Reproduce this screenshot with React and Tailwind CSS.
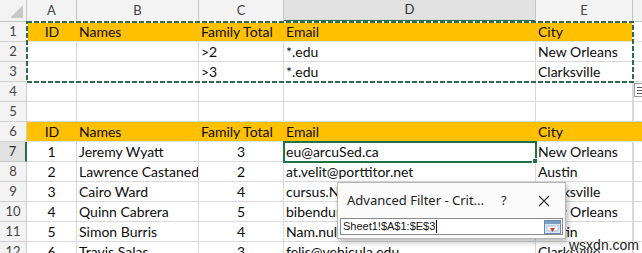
import React from 'react';

const COLS = [
  { letter: 'A', w: 'w-[50px]' },
  { letter: 'B', w: 'w-[122px]' },
  { letter: 'C', w: 'w-[85px]' },
  { letter: 'D', w: 'w-[252px]' },
  { letter: 'E', w: 'w-[97px]' },
];

// align: c = centred, l = left
const ROWS = [
  { n: 1, fill: 'table', cells: [['ID', 'c'], ['Names'], ['Family Total'], ['Email'], ['City']] },
  { n: 2, cells: [[''], [''], ['>2'], ['*.edu'], ['New Orleans']] },
  { n: 3, cells: [[''], [''], ['>3'], ['*.edu'], ['Clarksville']] },
  { n: 4, cells: [[''], [''], [''], [''], ['']] },
  { n: 5, cells: [[''], [''], [''], [''], ['']] },
  { n: 6, fill: 'row', cells: [['ID', 'c'], ['Names'], ['Family Total'], ['Email'], ['City']] },
  { n: 7, active: true, cells: [['1', 'c'], ['Jeremy Wyatt'], ['3', 'c'], ['eu@arcuSed.ca'], ['New Orleans']] },
  { n: 8, cells: [['2', 'c'], ['Lawrence Castaneda'], ['2', 'c'], ['at.velit@porttitor.net'], ['Austin']] },
  { n: 9, cells: [['3', 'c'], ['Cairo Ward'], ['4', 'c'], ['cursus.Nunc@ligula.edu'], ['Clarksville']] },
  { n: 10, cells: [['4', 'c'], ['Quinn Cabrera'], ['5', 'c'], ['bibendum@nunc.org'], ['New Orleans']] },
  { n: 11, cells: [['5', 'c'], ['Simon Burris'], ['4', 'c'], ['Nam.nulla@lacus.com'], ['Austin']] },
  { n: 12, cells: [['6', 'c'], ['Travis Salas'], ['3', 'c'], ['felis@vehicula.edu'], ['Clarksville']] },
];

function Row({ row }) {
  const yellow = row.fill === 'table' || row.fill === 'row';
  return (
    <div className="flex h-[20px] shrink-0">
      <div
        className={
          row.active
            ? 'w-[27px] shrink-0 flex items-center justify-center bg-[#e1e1e1] border-b border-b-[#c6c6c6] border-r-2 border-r-[#217346] text-[13px] text-[#2f2f2f]'
            : 'w-[27px] shrink-0 flex items-center justify-center bg-[#f3f3f3] border-b border-r border-[#d0d0d0] text-[13px] text-[#444]'
        }
      >
        {row.n}
      </div>
      {COLS.map((col, i) => {
        const [text, align] = row.cells[i];
        return (
          <div
            key={col.letter}
            className={[
              col.w,
              'shrink-0 flex items-center whitespace-nowrap overflow-hidden px-[2px] border-b',
              align === 'c' ? 'justify-center' : 'justify-start',
              yellow ? 'bg-[#ffc000] border-b-[#e3e3e3]' : 'border-r border-[#d9d9d9]',
            ].join(' ')}
          >
            {text}
          </div>
        );
      })}
      <div
        className={
          row.fill === 'row'
            ? 'flex-1 bg-[#ffc000] border-b border-[#e3e3e3]'
            : 'flex-1 border-b border-l border-[#d9d9d9]'
        }
      />
    </div>
  );
}

function RefEditIcon() {
  return (
    <svg width="17" height="14" viewBox="0 0 17 14">
      <rect x="0.5" y="0.5" width="16" height="13" fill="#d9e6f4" stroke="#6d8bb0" />
      <rect x="1" y="1" width="15" height="3" fill="#7d9cc4" />
      <rect x="3" y="6" width="11" height="5" fill="#ffffff" stroke="#9fb4cd" strokeWidth="0.8" />
      <path d="M6 8 L11 8 L8.5 12 Z" fill="#d2372a" />
    </svg>
  );
}

export default function App() {
  return (
    <div
      className="relative w-[642px] h-[253px] overflow-hidden bg-white text-[14px] text-[#0d0d0d]"
      style={{ fontFamily: 'Lato, "Liberation Sans", sans-serif' }}
    >
      {/* column headers */}
      <div className="flex h-[22px]">
        <div className="relative w-[27px] shrink-0 bg-[#f3f3f3] border-r border-b border-[#c6c6c6]">
          <div className="absolute right-[3px] bottom-[3px] w-0 h-0 border-l-[13px] border-l-transparent border-b-[13px] border-b-[#c9c9c9]" />
        </div>
        {COLS.map((col) => (
          <div
            key={col.letter}
            className={[
              col.w,
              'shrink-0 flex items-center justify-center text-[13px]',
              col.letter === 'D'
                ? 'bg-[#e1e1e1] border-b-2 border-b-[#217346] border-r border-r-[#c6c6c6] text-[#2f2f2f]'
                : 'bg-[#f3f3f3] border-b border-r border-[#c6c6c6] text-[#444]',
            ].join(' ')}
          >
            {col.letter}
          </div>
        ))}
        <div className="flex-1 bg-[#f3f3f3] border-b border-[#c6c6c6]" />
      </div>

      {ROWS.map((row) => (
        <Row key={row.n} row={row} />
      ))}

      {/* criteria range copy marquee */}
      <svg className="absolute left-[26px] top-[21px]" width="608" height="62">
        <rect x="1" y="1" width="606" height="60" fill="none" stroke="#ffffff" strokeWidth="2" />
        <rect x="1" y="1" width="606" height="60" fill="none" stroke="#2f6b48" strokeWidth="2" strokeDasharray="5 2" />
      </svg>

      {/* quick analysis button */}
      <div className="absolute left-[634px] top-[83px] w-[14px] h-[14px] bg-white border border-[#9a9a9a] flex flex-col justify-center gap-[2px] pl-[2px]">
        <div className="w-[7px] h-px bg-[#555]" />
        <div className="w-[7px] h-px bg-[#555]" />
        <div className="w-[7px] h-px bg-[#555]" />
      </div>

      {/* active cell D7 */}
      <div className="absolute left-[283px] top-[141px] w-[254px] h-[22px] border-2 border-[#217346]" />
      <div className="absolute left-[532px] top-[158px] w-[6px] h-[6px] bg-[#217346] border border-white" />

      {/* Advanced Filter criteria dialog */}
      <div
        className="absolute left-[337px] top-[182px] w-[229px] h-[57px] bg-[#fbfbfb] border border-[#b5b5b5] shadow-[2px_3px_6px_rgba(0,0,0,0.28)]"
        style={{ fontFamily: '"Noto Sans", "Liberation Sans", sans-serif' }}
      >
        <div className="flex items-center h-[35px] text-[13px] text-[#222]">
          <span className="flex-1 pl-[9px] whitespace-nowrap">Advanced Filter - Crit...</span>
          <span className="w-[44px] text-center">?</span>
          <span className="w-[46px] flex items-center justify-center">
            <svg width="12" height="12" viewBox="0 0 12 12">
              <path d="M1 1 L11 11 M11 1 L1 11" stroke="#333" strokeWidth="1.1" />
            </svg>
          </span>
        </div>
        <div className="mx-[2px] h-[17px] bg-white border border-[#8a8a8a] flex items-center">
          <span
            className="pl-[2px] text-[11px] text-[#111] leading-none"
            style={{ fontFamily: '"Liberation Sans", sans-serif' }}
          >
            Sheet1!$A$1:$E$3
          </span>
          <span className="w-px h-[13px] bg-[#111] ml-[1px]" />
          <span className="ml-auto mr-[1px] flex items-center">
            <RefEditIcon />
          </span>
        </div>
      </div>

      {/* watermark */}
      <div
        className="absolute left-[569px] top-[235px] text-[14px] text-[#222]"
        style={{ fontFamily: '"Liberation Sans", sans-serif', textShadow: '0 0 2px #fff, 0 0 2px #fff' }}
      >
        wsxdn.com
      </div>
    </div>
  );
}
